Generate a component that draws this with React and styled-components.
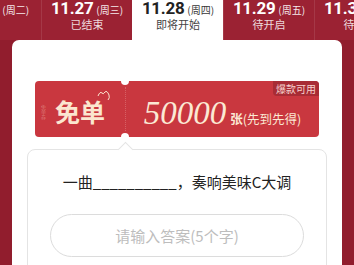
import styled, { createGlobalStyle } from 'styled-components';

const Global = createGlobalStyle`
  body { margin: 0; background: #911d2d; }
  * { box-sizing: border-box; }
`;

const days = [
  { date: '11.26', week: '(周二)' },
  { date: '11.27', week: '(周三)', state: '已结束' },
  { date: '11.28', week: '(周四)', state: '即将开始', active: true },
  { date: '11.29', week: '(周五)', state: '待开启' },
  { date: '11.30', week: '(周六)', state: '待开启' },
];

const App = () => {
  return (
    <Page>
      <Global />
      <TabBar>
        {days.map(d => (
          <Tab key={d.date} $active={d.active}>
            <DateLine>
              <DateNum>{d.date}</DateNum>
              <Week>{d.week}</Week>
            </DateLine>
            {d.state && <State $active={d.active}>{d.state}</State>}
          </Tab>
        ))}
      </TabBar>
      <Panel>
        <Ticket>
          <Stub>
            <StubMark>免单券</StubMark>
            <StubTitle>
              免单
              <Hat viewBox="0 0 14 12">
                <path d="M1 7 Q3 2 5 4 Q6 6 8 3 Q10 1 12 6 Q13 9 11 11" fill="none" stroke="#fbe6cf" strokeWidth="1" />
              </Hat>
            </StubTitle>
          </Stub>
          <Value>
            <Amount>50000</Amount>
            <Unit><b>张</b>(先到先得)</Unit>
          </Value>
          <Badge>爆款可用</Badge>
        </Ticket>
        <Question>
          <QText>一曲__________，奏响美味C大调</QText>
          <Answer placeholder="请输入答案(5个字)" />
        </Question>
      </Panel>
    </Page>
  );
};

export default App;

const Page = styled.div`
  width: 354px;
  height: 265px;
  overflow: hidden;
  background: #911d2d;
  font-family: "Noto Sans", "Noto Sans CJK SC", sans-serif;
`;

const TabBar = styled.div`
  display: flex;
  height: 40px;
  margin-left: -55px;
  background: #9b2233;
`;

const Tab = styled.div`
  flex: 0 0 91px;
  display: flex;
  flex-direction: column;
  align-items: center;
  background: ${p => (p.$active ? '#fff' : '#9b2233')};
  color: ${p => (p.$active ? '#222' : '#fff')};
  border-left: 1px solid ${p => (p.$active ? '#fff' : 'rgba(255,255,255,0.1)')};

  &:first-child {
    flex-basis: 96px;
    border-left: none;
  }
`;

const DateLine = styled.div`
  display: flex;
  align-items: baseline;
  gap: 3px;
  height: 16px;
  line-height: 16px;
`;

const DateNum = styled.span`
  font-family: Roboto, "Noto Sans", sans-serif;
  font-size: 17px;
  font-weight: 700;
  letter-spacing: -0.3px;
`;

const Week = styled.span`
  font-size: 10px;
  opacity: 0.9;
  font-family: "Noto Sans CJK SC", sans-serif;
`;

const State = styled.div`
  margin-top: 2px;
  font-size: 11px;
  line-height: 12px;
  font-family: "Noto Sans CJK SC", sans-serif;
  color: ${p => (p.$active ? '#444' : 'rgba(255,255,255,0.85)')};
`;

const Panel = styled.div`
  margin: 0 12px;
  height: 240px;
  background: #fff;
  border-radius: 7px 7px 0 0;
  padding: 41px 15px 0;
`;

const Ticket = styled.div`
  position: relative;
  display: flex;
  height: 56px;
  margin: 0 8px;
  background: #c9373f;
  border-radius: 4px;

  &::before,
  &::after {
    content: '';
    position: absolute;
    left: 86px;
    width: 8px;
    height: 8px;
    border-radius: 50%;
    background: #fff;
  }
  &::before { top: -4px; }
  &::after { bottom: -4px; }
`;

const Stub = styled.div`
  flex: 0 0 90px;
  display: flex;
  align-items: center;
  padding-left: 6px;
  gap: 10px;
`;

const StubMark = styled.span`
  writing-mode: vertical-rl;
  font-size: 5px;
  line-height: 4px;
  color: rgba(255, 230, 220, 0.35);
  margin-top: 6px;
`;

const StubTitle = styled.span`
  position: relative;
  font-family: "Noto Sans CJK SC", sans-serif;
  font-weight: 700;
  font-size: 25px;
  line-height: 28px;
  color: #fbe6cf;
  margin-top: 4px;
`;

const Hat = styled.svg`
  position: absolute;
  right: -6px;
  top: -8px;
  width: 14px;
  height: 12px;
`;

const Value = styled.div`
  flex: 1;
  display: flex;
  align-items: baseline;
  justify-content: center;
  gap: 4px;
  padding-top: 9px;
  border-left: 1px dotted rgba(255, 220, 210, 0.25);
  margin: 6px 0;
`;

const Amount = styled.span`
  font-family: "Liberation Serif", serif;
  font-style: italic;
  font-size: 33px;
  line-height: 34px;
  color: #fbe9d4;
`;

const Unit = styled.span`
  font-family: "Noto Sans CJK SC", sans-serif;
  font-size: 12.5px;
  color: #fbe9d4;
  b { font-weight: 700; }
`;

const Badge = styled.div`
  position: absolute;
  top: 0;
  right: 0;
  padding: 0 3px;
  height: 15px;
  line-height: 15px;
  font-size: 10px;
  font-family: "Noto Sans CJK SC", sans-serif;
  color: #f6d2cf;
  background: #a82c35;
  border-radius: 0 4px 0 4px;
`;

const Question = styled.div`
  position: relative;
  margin-top: 12px;
  height: 140px;
  border: 1px solid #e4e4e4;
  border-radius: 8px;
  padding: 21px 22px 0;
  display: flex;
  flex-direction: column;
  align-items: center;

  &::before {
    content: '';
    position: absolute;
    top: -6px;
    left: 92px;
    width: 10px;
    height: 10px;
    background: #fff;
    border-left: 1px solid #e4e4e4;
    border-top: 1px solid #e4e4e4;
    transform: rotate(45deg);
  }
`;

const QText = styled.div`
  font-family: "Noto Sans CJK SC", sans-serif;
  font-size: 15px;
  line-height: 22px;
  color: #222;
`;

const Answer = styled.input`
  margin-top: 21px;
  width: 254px;
  height: 43px;
  border: 1px solid #dcdcdc;
  border-radius: 22px;
  outline: none;
  text-align: center;
  font-family: "Noto Sans CJK SC", sans-serif;
  font-size: 15px;
  &::placeholder { color: #bdbdbd; }
`;
